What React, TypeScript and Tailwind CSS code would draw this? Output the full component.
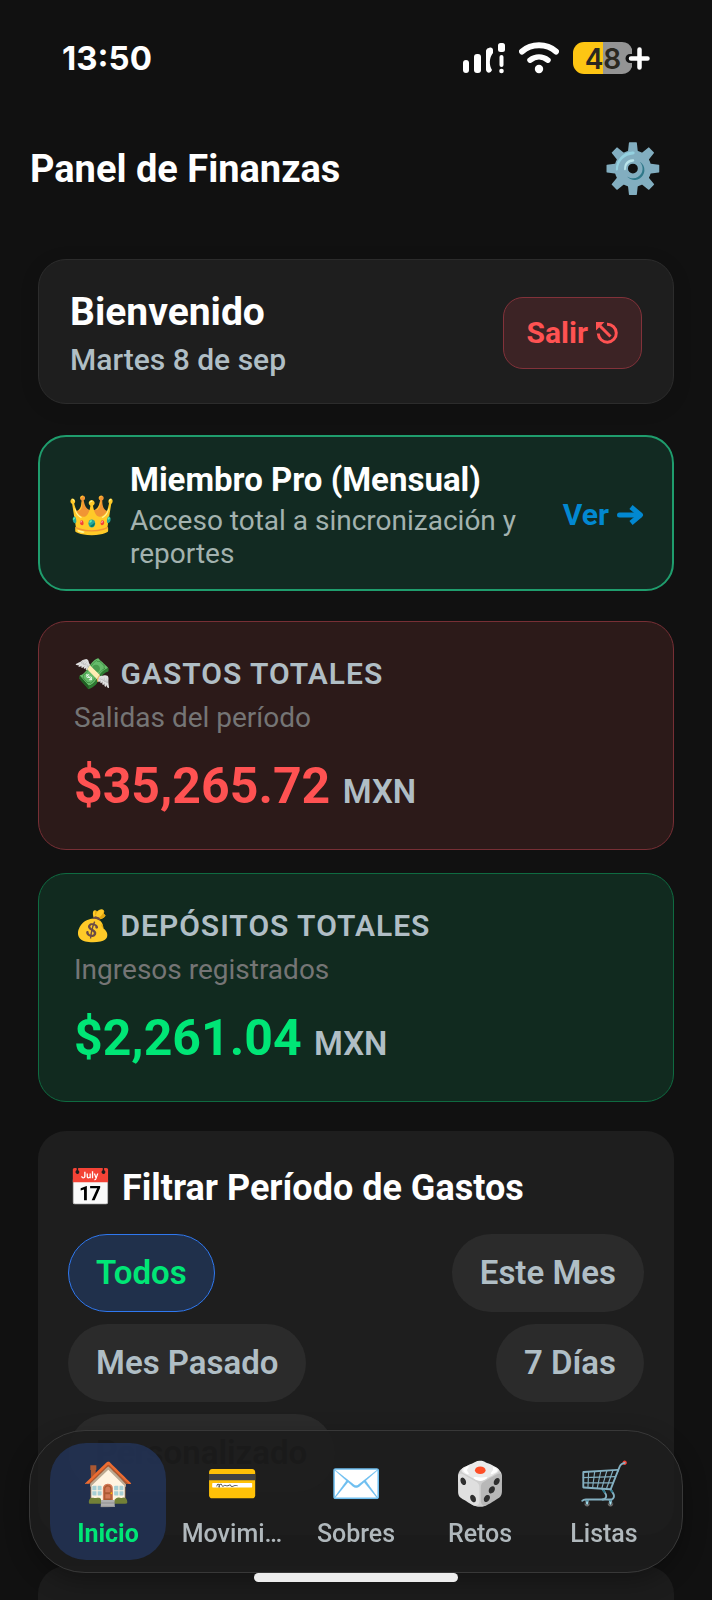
import { useState } from "react";

const FILTERS = ["Todos", "Este Mes", "Mes Pasado", "7 Días", "Personalizado"];

const TABS = [
  { icon: "🏠", label: "Inicio" },
  { icon: "💳", label: "Movimi…" },
  { icon: "✉️", label: "Sobres" },
  { icon: "🎲", label: "Retos" },
  { icon: "🛒", label: "Listas" },
];

function StatusBar() {
  return (
    <div className="flex h-[115px] shrink-0 items-center justify-between pr-[61px] pl-[62px]">
      <span className="font-[Inter] text-[33px] leading-10 font-bold">13:50</span>
      <div className="flex items-center gap-[14px]">
        {/* Dual SIM signal */}
        <svg width="42" height="32" viewBox="0 0 42 32" fill="#fff">
          <rect x="0" y="18" width="6" height="13" rx="3" />
          <rect x="11" y="12" width="7" height="19" rx="3" />
          <path d="M26 6c2-1 4 0 4 2v3c-4 5-4 12-1 17-1 3-5 4-6 0V9c0-1 1-3 3-3z" />
          <rect x="35" y="1" width="7" height="9" rx="2.500" />
          <rect x="36.500" y="13" width="4" height="12" rx="2" />
          <circle cx="38.500" cy="29" r="2.300" />
        </svg>
        {/* Wifi */}
        <svg width="40" height="32" viewBox="0 0 40 32" fill="none" stroke="#fff" strokeWidth="6" strokeLinecap="round">
          <path d="M3 9.500C12.500 1.200 27.500 1.200 37 9.500" />
          <path d="M11 18.200c5.500-4.200 12.500-4.200 18 0" strokeWidth="5.500" />
          <circle cx="20" cy="27" r="4.200" fill="#fff" stroke="none" />
        </svg>
        {/* Battery */}
        <svg width="78" height="34" viewBox="0 0 78 34">
          <path d="M11 1h19v32H11A11 11 0 0 1 0 22V12A11 11 0 0 1 11 1z" fill="#fdc513" />
          <path d="M30 1h19a11 11 0 0 1 10 7v18a11 11 0 0 1-10 7H30z" fill="#949494" />
          <path d="M57 17.500h18M66.500 8.500v18" stroke="#111" strokeWidth="9" strokeLinecap="round" />
          <path d="M58 17.500h16.500M66.500 8.500v18" stroke="#fff" strokeWidth="4.500" strokeLinecap="round" />
          <text x="30" y="27.500" textAnchor="middle" fill="#2b2820" className="font-[Inter] text-[28px] font-semibold">
            48
          </text>
        </svg>
      </div>
    </div>
  );
}

function ExitIcon() {
  return (
    <svg width="22" height="22" viewBox="0 0 22 22" fill="none" stroke="currentColor" strokeWidth="3">
      <path d="M11 2.200A9 9 0 1 1 2.300 11.500" />
      <path d="M14.500 14.500L4 4" />
      <path d="M0 0h8.500L0 8.500z" fill="currentColor" stroke="none" />
    </svg>
  );
}

function ArrowIcon() {
  return (
    <svg width="27" height="20" viewBox="0 0 27 20" fill="none" stroke="currentColor" strokeWidth="5">
      <path d="M2.500 10h20" strokeLinecap="round" />
      <path d="M14 2l9.500 8L14 18" strokeLinejoin="round" />
    </svg>
  );
}

type TotalCardProps = {
  title: string;
  subtitle: string;
  amount: string;
  cardClass: string;
  amountClass: string;
};

function TotalCard({ title, subtitle, amount, cardClass, amountClass }: TotalCardProps) {
  return (
    <section className={`shrink-0 rounded-[28px] border px-[35px] pt-[34px] pb-[33px] ${cardClass}`}>
      <h2 className="text-[30px] leading-9 font-semibold tracking-[1px] text-[#b0bec5]">{title}</h2>
      <p className="mt-2 text-[28px] leading-9 text-[#757575]">{subtitle}</p>
      <p className="mt-5 text-[50px] leading-[60px] font-bold">
        <span className={amountClass}>{amount}</span>{" "}
        <span className="text-[33px] leading-none font-semibold text-[#b0bec5]">MXN</span>
      </p>
    </section>
  );
}

export default function App() {
  const [filter, setFilter] = useState("Todos");
  const [tab, setTab] = useState("Inicio");

  return (
    <div className="flex h-screen flex-col overflow-hidden bg-[#111111] font-[Roboto,'Noto_Sans',sans-serif] text-white">
      <StatusBar />

      <header className="flex h-[108px] shrink-0 items-center justify-between pr-[49px] pl-[30px]">
        <h1 className="text-[38px] leading-[46px] font-bold">Panel de Finanzas</h1>
        <button type="button" aria-label="Ajustes" className="text-[48px] leading-[54px]">
          ⚙️
        </button>
      </header>

      <main className="flex min-h-0 flex-1 flex-col overflow-y-auto px-[38px] pt-9 [scrollbar-width:none]">
        {/* Welcome */}
        <section className="flex shrink-0 items-center justify-between rounded-[28px] border border-[#2c2c2c] bg-[#1e1e1e] px-[31px] pt-7 pb-[25px] shadow-[0_4px_20px_rgba(0,0,0,0.1)]">
          <div>
            <h2 className="text-[39px] leading-[48px] font-bold">Bienvenido</h2>
            <p className="mt-[6px] text-[30px] leading-9 font-medium text-[#b0bec5]">Martes 8 de sep</p>
          </div>
          <button
            type="button"
            className="flex items-center gap-2 rounded-[20px] border border-[#82323a] bg-[#3c2325] px-[23px] py-4 text-[30px] leading-[38px] font-bold text-[#ff5252]"
          >
            Salir
            <ExitIcon />
          </button>
        </section>

        {/* Membership */}
        <section className="mt-[31px] flex shrink-0 items-center rounded-[28px] border-2 border-[#1f9d6d] bg-[#122a22] px-7 pt-[23px] pb-[19px]">
          <span className="mr-[15px] text-[38px] leading-[46px]">👑</span>
          <div className="flex-1">
            <h2 className="text-[33px] leading-10 font-bold">Miembro Pro (Mensual)</h2>
            <p className="mt-1 text-[28px] leading-[33px] text-[#a3b2af]">
              Acceso total a sincronización y reportes
            </p>
          </div>
          <a
            href="#plan"
            className="ml-8 flex items-center gap-2 text-[30px] leading-9 font-bold whitespace-nowrap text-[#0288d1]"
          >
            Ver
            <ArrowIcon />
          </a>
        </section>

        {/* Totals */}
        <div className="mt-[30px] flex shrink-0 flex-col gap-[23px]">
          <TotalCard
            title="💸 GASTOS TOTALES"
            subtitle="Salidas del período"
            amount="$35,265.72"
            cardClass="border-[#772f35] bg-[#2c1a19]"
            amountClass="text-[#ff5252]"
          />
          <TotalCard
            title="💰 DEPÓSITOS TOTALES"
            subtitle="Ingresos registrados"
            amount="$2,261.04"
            cardClass="border-[#0f6b41] bg-[#112a1f]"
            amountClass="text-[#00e676]"
          />
        </div>

        {/* Period filter */}
        <section className="mt-[29px] shrink-0 rounded-[28px] bg-[#1e1e1e] px-[30px] pt-[35px] pb-[43px]">
          <h2 className="text-[36px] leading-[44px] font-bold">📅 Filtrar Período de Gastos</h2>
          <div className="mt-6 flex flex-wrap justify-between gap-3">
            {FILTERS.map((name) => (
              <button
                key={name}
                type="button"
                onClick={() => setFilter(name)}
                className={`rounded-full border px-[27px] py-[18px] text-[33px] leading-10 font-semibold ${
                  filter === name
                    ? "border-[#2f78f0] bg-[#20304b] text-[#00e676]"
                    : name === "Personalizado"
                      ? "border-transparent bg-[#2b2b2b] text-black"
                      : "border-transparent bg-[#2b2b2b] text-[#b0bec5]"
                }`}
              >
                {name}
              </button>
            ))}
          </div>
        </section>

        <section className="mt-[31px] h-[240px] shrink-0 rounded-[28px] bg-[#1c1c1c]" />
      </main>

      <nav className="fixed inset-x-[29px] bottom-[27px] flex gap-2 rounded-[56px] border border-[#383838] bg-[#1d1d1d]/90 px-5 py-3 shadow-[0_8px_24px_rgba(0,0,0,0.3)]">
        {TABS.map(({ icon, label }) => (
          <button
            key={label}
            type="button"
            onClick={() => setTab(label)}
            className={`flex min-w-0 flex-1 flex-col items-center gap-[9px] rounded-[36px] px-[6px] pt-4 pb-[10px] ${
              tab === label ? "bg-[#23345a]/80 font-bold text-[#00e676]" : "font-medium text-[#b0b8bc]"
            }`}
          >
            <span className="text-[42px] leading-[50px]">{icon}</span>
            <span className="w-full truncate text-center text-[25px] leading-8">{label}</span>
          </button>
        ))}
      </nav>

      {/* Home indicator */}
      <div className="fixed bottom-[18px] left-1/2 h-[9px] w-[204px] -translate-x-1/2 rounded-full bg-[#ededed]" />
    </div>
  );
}
